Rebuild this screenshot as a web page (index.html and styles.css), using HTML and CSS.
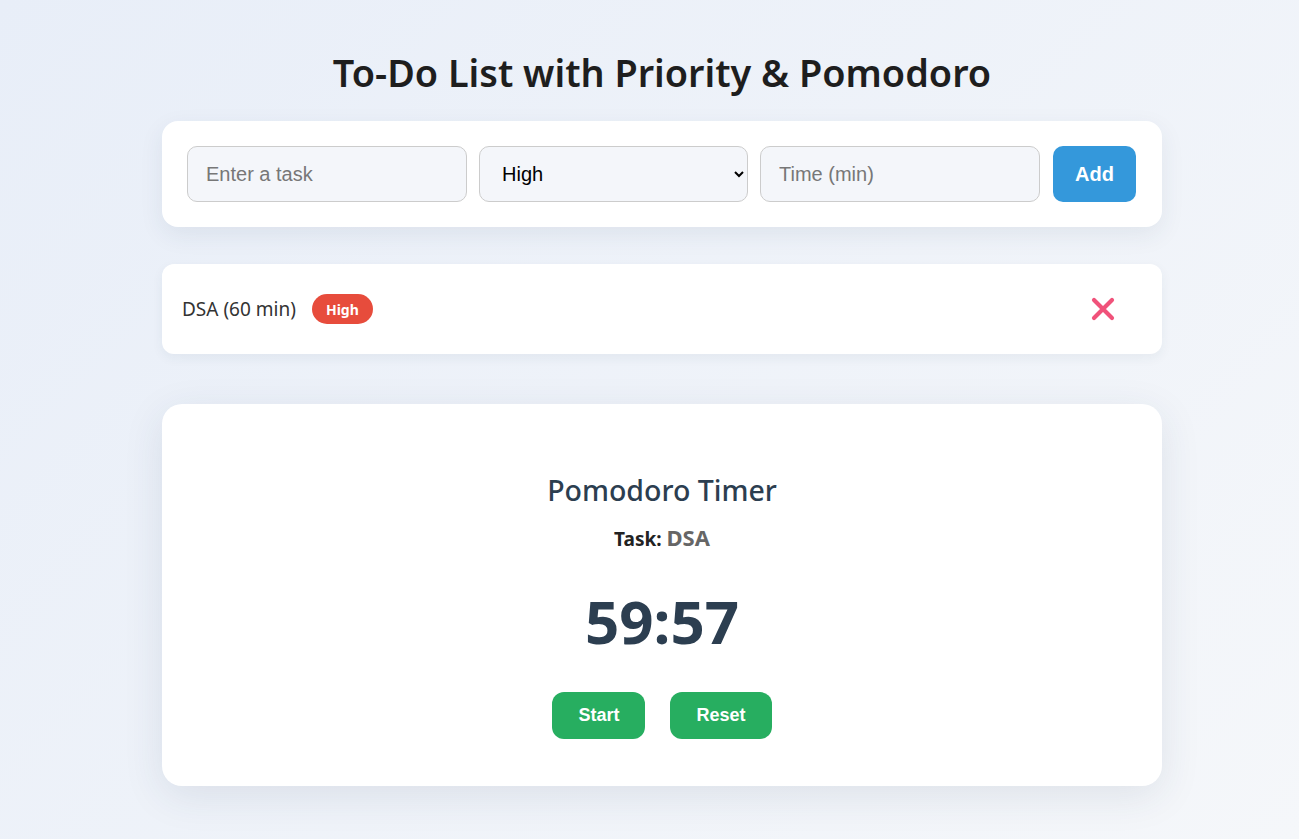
FILE: index.html
```html
<!DOCTYPE html>
<html lang="en">
<head>
<meta charset="utf-8">
<title>To-Do List with Priority &amp; Pomodoro</title>
<link rel="stylesheet" href="styles.css">
</head>
<body>
<div class="container">
  <h1 class="title">To-Do List with Priority &amp; Pomodoro</h1>
  <div class="card input-card">
    <input class="field" type="text" placeholder="Enter a task">
    <select class="field select">
      <option>High</option>
      <option>Medium</option>
      <option>Low</option>
    </select>
    <input class="field" type="number" placeholder="Time (min)">
    <button class="add-btn">Add</button>
  </div>
  <div class="card task-card">
    <span class="task-text">DSA (60 min)</span>
    <span class="badge">High</span>
    <span class="spacer"></span>
    <button class="del-btn" aria-label="Delete">
      <svg width="26" height="26" viewBox="0 0 26 26"><path d="M4 4 L22 22 M22 4 L4 22" stroke="#f0527a" stroke-width="4.2" stroke-linecap="round" fill="none"/></svg>
    </button>
  </div>
  <div class="card timer-card">
    <h2 class="timer-title">Pomodoro Timer</h2>
    <p class="timer-task">Task: <span class="task-name">DSA</span></p>
    <div class="time">59:57</div>
    <div class="timer-btns">
      <button class="green-btn">Start</button>
      <button class="green-btn">Reset</button>
    </div>
  </div>
</div>
</body>
</html>
```
FILE: styles.css
```css
html, body {
  height: 100%;
}
body {
  margin: 0;
  padding-left: 25px;
  background: linear-gradient(135deg, #e8eef8 0%, #f5f7fa 100%);
  font-family: "Noto Sans", "Open Sans", sans-serif;
  color: #222;
}
.container {
  width: 1000px;
  margin: 0 auto;
  padding-top: 49px;
}
.title {
  margin: 0 0 24px;
  text-align: center;
  font-size: 37.8px;
  font-weight: 600;
  line-height: 48px;
  color: #1e1e1e;
}
.card {
  background: #fff;
  border-radius: 16px;
  box-shadow: 0 8px 24px rgba(40, 60, 90, 0.08);
}
.input-card {
  display: grid;
  grid-template-columns: 280px 269px 280px 84px;
  column-gap: 12px;
  padding: 25px;
  height: 106px;
  box-sizing: border-box;
}
.field {
  height: 56px;
  box-sizing: border-box;
  border: 1px solid #ccc;
  border-radius: 10px;
  background: #f4f6fa;
  padding: 0 18px;
  font-family: "Liberation Sans", Arial, sans-serif;
  font-size: 20px;
  color: #000;
  outline: none;
}
.field::placeholder {
  color: #777;
}
.select {
  padding: 0 20px 0 18px;
}
.add-btn {
  margin-left: 1px;
  height: 56px;
  border: none;
  border-radius: 10px;
  background: #3498db;
  color: #fff;
  font-family: "Liberation Sans", Arial, sans-serif;
  font-weight: 700;
  font-size: 20px;
}
.task-card {
  margin-top: 37px;
  height: 90px;
  box-sizing: border-box;
  display: flex;
  align-items: center;
  padding: 0 20px;
  border-radius: 12px;
  box-shadow: 0 4px 12px rgba(40, 60, 90, 0.06);
}
.task-text {
  font-size: 19px;
  color: #333;
}
.badge {
  margin-left: 16px;
  height: 30px;
  width: 61px;
  box-sizing: border-box;
  display: inline-flex;
  align-items: center;
  justify-content: center;
  border-radius: 15px;
  background: #e74c3c;
  color: #fff;
  font-weight: 700;
  font-size: 14px;
}
.spacer {
  flex: 1;
}
.del-btn {
  border: none;
  background: none;
  padding: 0;
  margin-right: 26px;
  display: flex;
}
.timer-card {
  margin-top: 50px;
  height: 382px;
  box-sizing: border-box;
  border-radius: 20px;
  text-align: center;
  padding-top: 66px;
  box-shadow: 0 10px 40px rgba(40, 60, 90, 0.10);
}
.timer-title {
  margin: 0;
  font-size: 28.5px;
  font-weight: 500;
  line-height: 40px;
  color: #2c3e50;
}
.timer-task {
  margin: 13px 0 0;
  font-size: 19px;
  font-weight: 700;
  line-height: 28px;
  color: #222;
}
.task-name {
  font-size: 22px;
  color: #666;
}
.time {
  margin-top: 28px;
  font-size: 60px;
  font-weight: 700;
  line-height: 80px;
  color: #2c3e50;
}
.timer-btns {
  margin-top: 31px;
  display: flex;
  justify-content: center;
  gap: 25px;
}
.green-btn {
  height: 47px;
  padding: 0 26px;
  border: none;
  border-radius: 12px;
  background: #27ae60;
  color: #fff;
  font-family: "Liberation Sans", Arial, sans-serif;
  font-weight: 700;
  font-size: 18px;
}
```
